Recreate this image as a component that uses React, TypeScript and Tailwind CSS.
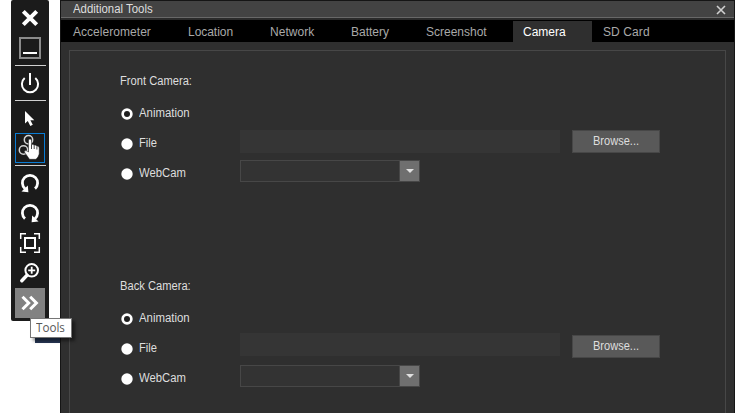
import React from "react";

const tabs = [
  { label: "Accelerometer", box: "w-[115px] pl-[12px]", spacing: "tracking-[0.04px]" },
  { label: "Location", box: "w-[82px] pl-[12px]", spacing: "tracking-[-0.04px]" },
  { label: "Network", box: "w-[81px] pl-[12px]", spacing: "tracking-[0.04px]" },
  { label: "Battery", box: "w-[75px] pl-[12px]", spacing: "tracking-[0px]" },
  { label: "Screenshot", box: "w-[99px] pl-[12px]", spacing: "tracking-[0px]" },
  { label: "Camera", box: "w-[79px] pl-[10px]", spacing: "tracking-[0px]", active: true },
  { label: "SD Card", box: "w-[80px] pl-[11px]", spacing: "tracking-[0.1px]" },
];

function Label({ text, className = "" }: { text: string; className?: string }) {
  return (
    <span className={`block shrink-0 origin-left whitespace-nowrap leading-[16px] ${className}`}>{text}</span>
  );
}

function Cell({ children, className = "" }: { children: React.ReactNode; className?: string }) {
  return <div className={`h-[30px] w-[30px] shrink-0 ${className}`}>{children}</div>;
}

function Icon({ children }: { children: React.ReactNode }) {
  return (
    <svg width="30" height="30" viewBox="0 0 30 30" fill="none" stroke="#fff" className="block">
      {children}
    </svg>
  );
}

function Rule() {
  return <div className="my-[2px] h-px w-[31px] shrink-0 bg-[#d0d0d0]" />;
}

function Toolbar() {
  return (
    <aside className="flex h-[321px] w-[38px] shrink-0 flex-col rounded-[2px] bg-[#1b1b1b] pl-1 pt-[3px]">
      <Cell>
        <Icon><path d="M8.3 8.3 21.7 21.7M21.7 8.3 8.3 21.7" strokeWidth="4" /></Icon>
      </Cell>
      <Cell>
        <Icon>
          <rect x="5" y="5" width="20" height="20" stroke="#8c8c8c" strokeWidth="2" />
          <path d="M8 20H22" strokeWidth="2" />
        </Icon>
      </Cell>
      <Rule />
      <Cell>
        <Icon>
          <path d="M15 5V17" strokeWidth="2" />
          <path d="M9.7 10A8.1 8.1 0 1 0 20.3 10" strokeWidth="2" />
        </Icon>
      </Cell>
      <Rule />
      <Cell>
        <Icon><path d="M10 8V20.5L12.8 18L15.3 23L17.8 21.8L15.4 17.2H19.3Z" fill="#fff" stroke="none" /></Icon>
      </Cell>
      <Cell className="border border-[#0a7cd4]">
        <svg width="28" height="28" viewBox="0 0 28 28" className="block">
          <g fill="none" stroke="#d4d4d4" strokeWidth="1.5">
            <circle cx="12.5" cy="5.7" r="4.2" />
            <circle cx="7.5" cy="16" r="4.2" />
          </g>
          <path d="M12.5 6Q14 3.8 15.5 6V10.8Q17 9.6 18 11.3Q19.8 10.4 20.7 12.2Q22.8 11.6 23.2 13.8V20Q22.5 23 20 25.3H13.5L8.2 17.7Q9.5 15.2 12.5 18Z" fill="#fff" stroke="#1b1b1b" strokeWidth=".5" />
          <path d="M15.5 10.8V15M18.2 11.5V15M20.9 12.5V15.5" fill="none" stroke="#1b1b1b" strokeWidth=".8" />
        </svg>
      </Cell>
      <Rule />
      <Cell>
        <Icon>
          <path d="M10 20.6A7.6 7.6 0 1 1 20 20.6" strokeWidth="2.8" />
          <path d="M6.5 23.4 13.4 24.2 12.8 17.5Z" fill="#fff" stroke="none" />
        </Icon>
      </Cell>
      <Cell>
        <Icon>
          <path d="M10 20.6A7.6 7.6 0 1 1 20 20.6" strokeWidth="2.8" />
          <path d="M23.5 23.4 16.6 24.2 17.2 17.5Z" fill="#fff" stroke="none" />
        </Icon>
      </Cell>
      <Cell>
        <Icon>
          <rect x="10" y="10" width="10" height="10" strokeWidth="2" />
          <path d="M5.7 11V5.7H11M19 5.7H24.3V11M24.3 19V24.3H19M11 24.3H5.7V19" strokeWidth="1.5" />
        </Icon>
      </Cell>
      <Cell>
        <Icon>
          <circle cx="16.7" cy="12.3" r="6.3" strokeWidth="2" />
          <path d="M16.7 8.8V15.8M13.2 12.3H20.2" strokeWidth="1.8" />
          <path d="M12 17.3 6.8 22.7" strokeWidth="3.4" strokeLinecap="round" />
        </Icon>
      </Cell>
      <Cell className="bg-[#828282]">
        <Icon><path d="M7.5 8.8 13.7 15 7.5 21.2M15.2 8.8 21.4 15 15.2 21.2" strokeWidth="3" /></Icon>
      </Cell>
    </aside>
  );
}

function RadioOption({ text, scale, checked = false }: { text: string; scale: string; checked?: boolean }) {
  return (
    <div className="flex h-[30px] w-[120px] items-center">
      <svg width="14" height="14" className="mt-[3px] block shrink-0">
        <circle cx="7" cy="7" r="5.7" fill="#fff" />
        {checked && <circle cx="7" cy="7" r="3" fill="#202020" />}
      </svg>
      <Label text={text} className={`ml-[5px] mt-px ${scale}`} />
    </div>
  );
}

function CameraSection({ title, back = false }: { title: string; back?: boolean }) {
  return (
    <section className="h-[205px] pl-[50px]">
      <Label text={title} className="w-[76px] scale-x-[0.93]" />
      <div className="flex pt-[8px]">
        <div>
          <RadioOption text="Animation" scale="scale-x-[0.95]" checked />
          <RadioOption text="File" scale="scale-x-[0.93]" />
          <RadioOption text="WebCam" scale="scale-x-[0.94]" />
        </div>
        <div className={back ? "pt-[31px]" : "pt-[33px]"}>
          <div className="h-[23px] w-[320px] bg-[#353535]" />
          <div className={`flex h-[22px] w-[180px] border border-[#474747] bg-[#333] ${back ? "mt-[9px]" : "mt-[7px]"}`}>
            <div className="flex-1 border-r border-[#474747]" />
            <div className="flex w-[19px] items-center justify-center bg-[#6f6f6f]">
              <svg width="8" height="4" className="block"><path d="M0 0H8L4 4Z" fill="#e0e0e0" /></svg>
            </div>
          </div>
        </div>
        <button className="ml-3 mt-[33px] h-[23px] w-[88px] border border-[#474747] bg-[#595959] pb-px pl-[20px] text-left">
          <Label text="Browse..." className="scale-x-[0.92]" />
        </button>
      </div>
    </section>
  );
}

export default function App() {
  return (
    <main className="relative flex h-[413px] w-[735px] overflow-hidden bg-white pl-[11px] font-['Liberation_Sans',sans-serif] text-[12px] text-[#dedede]">
      <Toolbar />
      <div className="ml-[11px] flex h-full w-[675px] flex-col border-x border-t border-[#151515] bg-[#2f2f2f]">
        <header className="flex h-[17px] shrink-0 justify-between border-b border-[#686868] bg-[#434343] pl-[12px] pr-[8px]">
          <Label text="Additional Tools" className="scale-x-[0.95]" />
          <svg width="10" height="10" className="mt-[4px] block"><path d="M1 1 9 9M9 1 1 9" stroke="#d0d0d0" strokeWidth="1.6" /></svg>
        </header>
        <div className="h-[2px] shrink-0 bg-[#2b2b2b]" />
        <nav className="flex h-[22px] shrink-0 bg-black">
          {tabs.map((tab) => (
            <div key={tab.label} className={`shrink-0 ${tab.box} ${tab.active ? "mt-px h-[21px] bg-[#2f2f2f] pt-[3px] text-white" : "h-full pt-[4px] text-[#a9a9a9]"}`}>
              <Label text={tab.label} className={tab.spacing} />
            </div>
          ))}
        </nav>
        <div className="mx-[8px] mt-[8px] flex-1 overflow-hidden border-x border-t border-[#474747] pt-[22px]">
          <CameraSection title="Front Camera:" />
          <CameraSection title="Back Camera:" back />
        </div>
      </div>
      <div className="absolute left-[35px] top-[338px] h-[5px] w-[25px] bg-[#263654]" />
      <div className="absolute left-[30px] top-[318px] h-[20px] w-[42px] border border-[#767676] bg-white pl-[5px] font-['Open_Sans',sans-serif] text-[#575757] shadow-[3px_3px_3px_rgba(0,0,0,0.45)]">
        <Label text="Tools" className="mt-[1px] scale-x-[0.97]" />
      </div>
    </main>
  );
}
